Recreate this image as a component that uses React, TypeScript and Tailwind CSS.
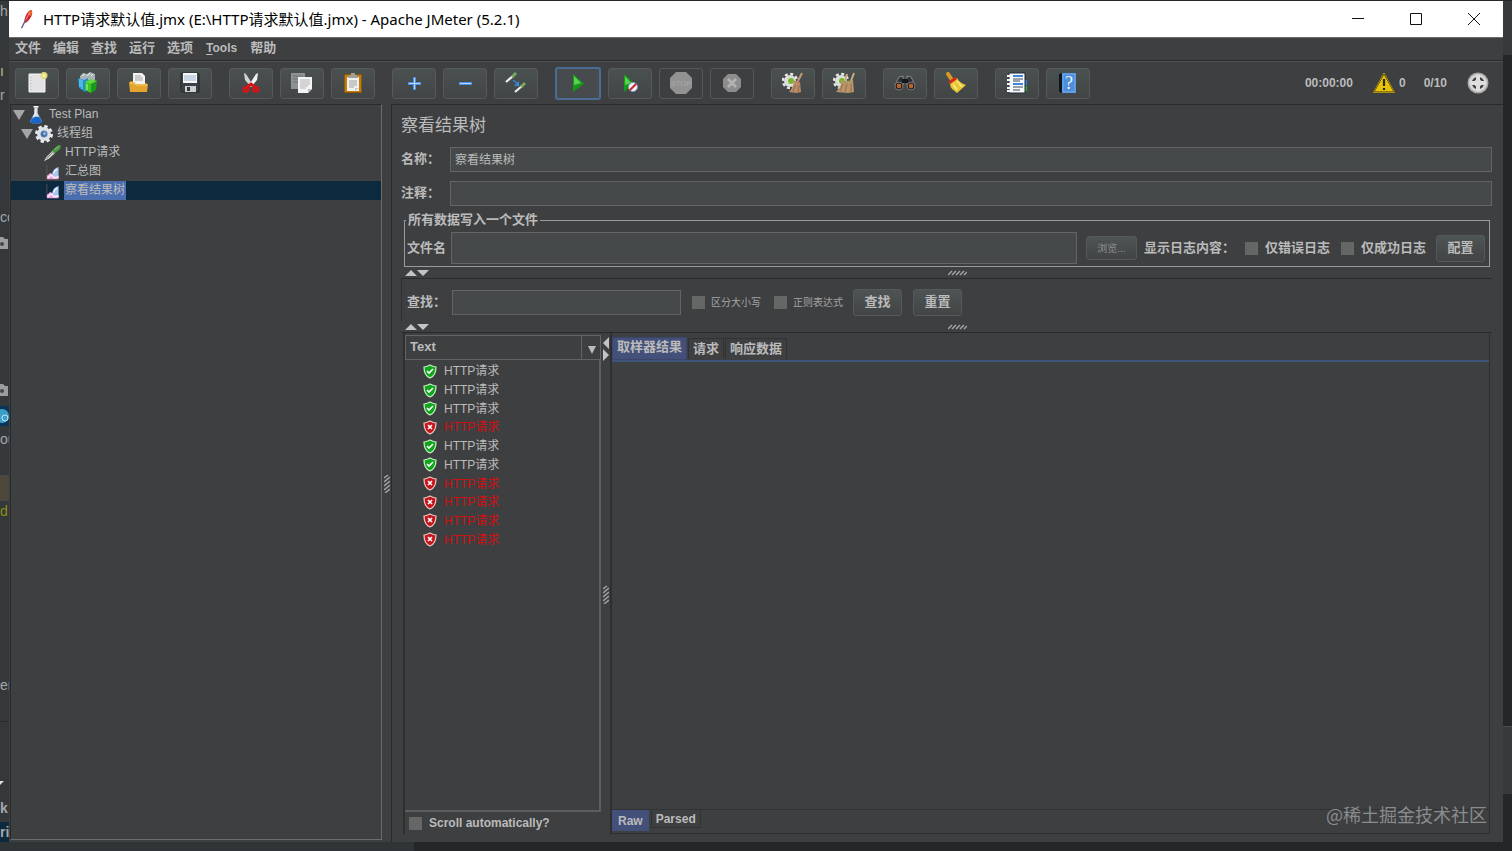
import { useState } from "react";
import type { ReactNode } from "react";
import clsx from "clsx";

const samples = [true, true, true, false, true, true, false, false, false, false];

function Svg({ children, size = 22 }: { children: ReactNode; size?: number }) {
  return (
    <svg width={size} height={size} viewBox="0 0 22 22" fill="none" aria-hidden="true" className="shrink-0">
      {children}
    </svg>
  );
}

function NewIcon() {
  return (
    <Svg>
      <path d="M3 2h16v18H3z" fill="#e2e2e4" stroke="#f6f6f6" />
      <path d="M5 5v13" stroke="#b5b5ba" strokeDasharray="1 2" />
      <circle cx="18" cy="3.500" r="3.500" fill="#dedc80" />
      <circle cx="18" cy="3.500" r="1.500" fill="#f7f5a8" />
    </Svg>
  );
}

function TemplatesIcon() {
  return (
    <Svg>
      <path d="M3 4l3-3 4 1 3-2 5 2v6H3z" fill="#a9b3b5" />
      <path d="M5 4l3-2M10 4l3-3M14 4l2-2" stroke="#e8eeee" />
      <path d="M1 6l6 2 4-2v12l-3 2-6-4z" fill="#1b8fd0" />
      <path d="M3 7v8M5 8v9" stroke="#8fd8f5" />
      <path d="M8 10l6 2v9l-6-3z" fill="#3fc52a" />
      <path d="M14 12l6-3-1 9-5 3z" fill="#199a1c" />
      <path d="M8 10l6-3 6 2-6 3z" fill="#5fdb3c" />
      <path d="M10 12v6" stroke="#b0f58c" />
    </Svg>
  );
}

function OpenIcon() {
  return (
    <Svg>
      <path d="M2 9h4l1 2h12v9H2z" fill="#b87f17" />
      <path d="M5 1h9l3 3v9H5z" fill="#f3f3f3" />
      <path d="M7 4h6M7 6h8M7 8h8" stroke="#a5a5a5" />
      <path d="M1 10h5l2 2h12l-1 8H2z" fill="#e3a52d" />
      <path d="M2 11h4l2 2h11" stroke="#f7cf6d" />
    </Svg>
  );
}

function SaveIcon() {
  return (
    <Svg>
      <path d="M2 1h17l1 1v18H3l-1-1z" fill="#3b4046" stroke="#24282c" />
      <path d="M4 1h14v10H4z" fill="#f4f6f8" />
      <path d="M5 4h12M5 6h12M5 8h12" stroke="#9db4cf" />
      <path d="M6 14h11v6H6z" fill="#cfcfcf" />
      <path d="M8 15h3v4H8z" fill="#33373b" />
    </Svg>
  );
}

function CutIcon() {
  return (
    <Svg>
      <path d="M4 1l2 1 7 11-2 2-6-7z" fill="#cfd3d4" />
      <path d="M18 1l-2 1-7 11 2 2 6-7z" fill="#f1f2f2" />
      <ellipse cx="6" cy="17.500" rx="2.500" ry="2" stroke="#d81318" strokeWidth="2.500" />
      <ellipse cx="16" cy="17.500" rx="2.500" ry="2" stroke="#d81318" strokeWidth="2.500" />
      <path d="M7 15l4-3 4 3" stroke="#d81318" strokeWidth="3" />
    </Svg>
  );
}

function CopyIcon() {
  return (
    <Svg>
      <path d="M0 1h14v16H0z" fill="#8f9294" />
      <path d="M2 4h10M2 7h8M2 10h5" stroke="#6d7072" />
      <path d="M7 5h14v12l-4 4H7z" fill="#f4f4f4" />
      <path d="M9 8h10M9 10h10M9 12h10M9 14h8M9 16h6" stroke="#b4b4b4" />
      <path d="M17 21v-4h4z" fill="#b9b9b9" />
    </Svg>
  );
}

function PasteIcon() {
  return (
    <Svg>
      <rect x="2.500" y="2.500" width="17" height="18" rx="1" fill="#c17d11" stroke="#8f5902" />
      <path d="M5 5h12v14H5z" fill="#f0f0ee" />
      <path d="M7 3h8l1 3H6zM9 1h4v3H9z" fill="#9ea09c" />
      <path d="M7 9h8M7 11h8M7 13h8M7 15h5" stroke="#a0a0a0" />
      <path d="M13 19v-3h4z" fill="#c9c9c9" />
    </Svg>
  );
}

function ToggleIcon() {
  return (
    <Svg>
      <path d="M1 10l7-6" stroke="#eef0ee" strokeWidth="2.200" />
      <path d="M7 5l4-4" stroke="#79a860" strokeWidth="3" />
      <path d="M10 20l7-6" stroke="#eef0ee" strokeWidth="2.200" />
      <path d="M16 15l4-4" stroke="#79a860" strokeWidth="3" />
      <path d="M8 8l5 4" stroke="#3987d8" strokeWidth="1.500" />
      <path d="M14 9v5H9z" fill="#3987d8" />
    </Svg>
  );
}

function PlayIcon() {
  return (
    <Svg>
      <path d="M6 2l11 9.500L6 20z" fill="#139a16" />
      <path d="M7 4l7 7-7 2z" fill="#5dcf52" />
    </Svg>
  );
}

function PlayNoPauseIcon() {
  return (
    <Svg>
      <path d="M5 2l10 9-10 9z" fill="#139a16" />
      <path d="M6 4l6 7-6 2z" fill="#5dcf52" />
      <circle cx="14" cy="15" r="4.500" fill="#eef1f8" stroke="#8097c0" />
      <path d="M11 18l6-6" stroke="#d42222" strokeWidth="2" />
    </Svg>
  );
}

function StopIcon() {
  return (
    <svg width="22" height="22" viewBox="0 0 22 22" aria-hidden="true">
      <path d="M6 0h10l6 6v10l-6 6H6l-6-6V6z" fill="#929292" />
      <text x="11" y="14" textAnchor="middle" fontSize="8" fill="#a9a9a9" fontFamily="Liberation Sans">
        STOP
      </text>
    </svg>
  );
}

function ShutdownIcon() {
  return (
    <Svg>
      <path d="M7 2h8l5 5v8l-5 5H7l-5-5V7z" fill="#8d8d8d" />
      <path d="M7 7l8 8M15 7l-8 8" stroke="#b4b4b4" strokeWidth="2.500" />
    </Svg>
  );
}

function GearShape() {
  return (
    <>
      <circle cx="8" cy="9" r="7" stroke="#e8e9e6" strokeWidth="2.500" strokeDasharray="3 2.500" />
      <circle cx="8" cy="9" r="6" fill="#dddfda" />
      <circle cx="9" cy="9" r="3" fill="#76b82c" />
    </>
  );
}

function ClearIcon() {
  return (
    <Svg>
      <GearShape />
      <path d="M20 1l-4 8" stroke="#c09a70" strokeWidth="2" />
      <path d="M12 9l6 1 1 10-4 1-8-1c3-3 4-6 5-11z" fill="#b98d6a" />
      <path d="M14 13l-3 6M17 13l-1 7" stroke="#94694a" />
      <path d="M12 9l6 2" stroke="#c7705a" />
    </Svg>
  );
}

function ClearAllIcon() {
  return (
    <Svg>
      <GearShape />
      <path d="M14 2l-2 7M21 1l-3 8" stroke="#c9ac82" strokeWidth="2" />
      <path d="M9 8l5 1 6-1 1 12-6 1-12-1c3-3 5-6 6-12z" fill="#b9946a" />
      <path d="M10 12l-3 7M14 12l-2 8M18 12v8" stroke="#94704a" />
      <path d="M9 9l5 1 5-1" stroke="#9aa062" />
    </Svg>
  );
}

function BinocularsIcon() {
  return (
    <Svg>
      <path d="M5 5l4-1v9H1zM17 5l-4-1v9h8z" fill="#2b2e32" stroke="#878b90" />
      <path d="M8 7h6v4H8z" fill="#15181b" />
      <circle cx="5" cy="14" r="4" fill="#17191c" stroke="#777" />
      <circle cx="17" cy="14" r="4" fill="#17191c" stroke="#777" />
      <circle cx="5" cy="14" r="2.400" fill="#b5652c" />
      <circle cx="17" cy="14" r="2.400" fill="#b5652c" />
    </Svg>
  );
}

function BroomIcon() {
  return (
    <Svg>
      <path d="M3 2l4 6" stroke="#d79a25" strokeWidth="4" strokeLinecap="round" />
      <path d="M12 6c2 4 6 6 9 7l-9 8c-3-3-7-4-7-10z" fill="#e8c832" />
      <path d="M8 12l4 6M12 9l5 6" stroke="#fbe98a" strokeWidth="1.500" />
      <path d="M4 11l7-5" stroke="#cf2a20" strokeWidth="3" />
    </Svg>
  );
}

function FunctionIcon() {
  return (
    <Svg>
      <path d="M18 8h3v5h-3z" fill="#2f7de0" />
      <path d="M18 14h3v5h-3z" fill="#39a52d" />
      <path d="M3 1h16v20H3z" fill="#f7f9fc" stroke="#1e2937" />
      <path d="M7 4h10M7 12h10" stroke="#3f86d8" strokeWidth="2" />
      <path d="M7 7h10M7 9h7M7 15h10M7 18h7" stroke="#3a4653" />
      <path d="M1 4h4M1 8h4M1 12h4M1 16h4M1 19h4" stroke="#f5f5f5" strokeWidth="2" />
    </Svg>
  );
}

function HelpIcon() {
  return (
    <svg width="22" height="22" viewBox="0 0 22 22" aria-hidden="true">
      <path d="M2 2l3-1v20l-3-1z" fill="#11161c" />
      <path d="M5 1h14v20H5z" fill="#4d8fdb" />
      <path d="M6 2h12v18H6z" fill="none" stroke="#73acea" />
      <text x="12" y="17" textAnchor="middle" fontSize="18" fill="#f0f5fb" fontFamily="Liberation Serif">
        ?
      </text>
    </svg>
  );
}

function PlusIcon() {
  return (
    <Svg>
      <path d="M11.500 5v13M5 11.500h13" stroke="#4b8fe2" strokeWidth="3" />
      <path d="M11.500 6v11M6 11.500h11" stroke="#b7d7fa" />
    </Svg>
  );
}

function MinusIcon() {
  return (
    <Svg>
      <path d="M5 11.500h13" stroke="#4b8fe2" strokeWidth="3" />
      <path d="M6 11.500h11" stroke="#b7d7fa" />
    </Svg>
  );
}

function FeatherIcon() {
  return (
    <Svg size={20}>
      <path d="M8 15C8 9 11 2 16 1c2 3 0 9-6 14z" fill="#d22128" />
      <path d="M12 5c1-2 2-4 4-4 1 2 1 4-1 7z" fill="#e8632a" />
      <path d="M9 13l5-9" stroke="#f4b0a0" />
      <path d="M10 11l-5 10" stroke="#6d5a8a" strokeWidth="1.500" />
    </Svg>
  );
}

function FlaskIcon() {
  return (
    <Svg size={18}>
      <path d="M9 2h4v7l5 9c0 2-1 3-3 3H7c-2 0-3-1-3-3l5-9z" fill="#d3dfeb" />
      <path d="M7 13h8l3 5c0 2-1 3-3 3H7c-2 0-3-1-3-3z" fill="#1765c9" />
      <path d="M8 1h6" stroke="#fff" strokeWidth="2" />
      <path d="M10 4v6l-3 5" stroke="#fff" />
    </Svg>
  );
}

function ThreadGroupIcon() {
  return (
    <Svg size={18}>
      <circle cx="11" cy="11" r="9" stroke="#e8ebef" strokeWidth="4" strokeDasharray="4 3.070" />
      <circle cx="11" cy="11" r="6" stroke="#dde1e6" strokeWidth="5" />
      <circle cx="11" cy="11" r="4" fill="#2f5f9f" stroke="#8da0b8" />
      <path d="M9 10l3-2 2 3-3 2z" fill="#8ab4e4" />
    </Svg>
  );
}

function SamplerIcon() {
  return (
    <Svg size={18}>
      <path d="M1 21l3-5 8-8 3 3-8 7z" fill="#cfd3cf" />
      <path d="M4 18l8-8" stroke="#6c716c" />
      <path d="M11 8l8-7 3 1-1 4-7 6z" fill="#4c9440" />
      <path d="M14 7l5-4" stroke="#9ccc8b" />
    </Svg>
  );
}

function ListenerIcon() {
  return (
    <Svg size={16}>
      <path d="M4 1v19h17" stroke="#5d5f61" />
      <path d="M4 20v-4l5-4 3 3 8 1v5H4z" fill="#ef9fe0" />
      <path d="M11 14c1-5 4-9 9-10v14l-6 1z" fill="#a9c6ee" />
      <path d="M13 13c1-3 3-5 5-6" stroke="#eef5ff" strokeWidth="2" />
      <path d="M5 19l5-4 4 4 6-1" stroke="#fff0fb" strokeWidth="2" />
    </Svg>
  );
}

function ShieldIcon({ ok }: { ok: boolean }) {
  return (
    <svg width="14" height="15" viewBox="0 0 14 15" fill="none" aria-hidden="true" className="shrink-0">
      <path
        d="M7 1c2 1 4 2 6 2 0 5-1 9-6 11C2 12 1 8 1 3c2 0 4-1 6-2z"
        fill={ok ? "#0fa61c" : "#c3161c"}
        stroke={ok ? "#c9efc9" : "#f0caca"}
        strokeWidth="1.200"
      />
      {ok ? (
        <path d="M4 7l2 2 4-4" stroke="#fff" strokeWidth="1.600" />
      ) : (
        <path d="M5 5l4 4M9 5L5 9" stroke="#fff" strokeWidth="1.600" />
      )}
    </svg>
  );
}

function WarningIcon() {
  return (
    <Svg>
      <path d="M11 2l10 18H1z" fill="#e8c30c" stroke="#3a3000" />
      <path d="M11 1l10.500 19.500H.5z" stroke="#d8b80e" strokeWidth=".7" />
      <path d="M11 7v7M11 16v2" stroke="#2d2600" strokeWidth="2.200" />
    </Svg>
  );
}

function RemoteIcon() {
  return (
    <Svg>
      <circle cx="11" cy="11" r="10.500" fill="#a9a9a9" />
      <circle cx="11" cy="11" r="9" fill="#d6d6d6" />
      <circle cx="11" cy="11" r="5" stroke="#3f4041" strokeWidth="2.500" />
      <path d="M11 3v16M3 11h16" stroke="#dedede" strokeWidth="4" />
    </Svg>
  );
}

const toolGroups: { label: string; icon: ReactNode; focused?: boolean; off?: boolean }[][] = [
  [
    { label: "新建", icon: <NewIcon /> },
    { label: "模板", icon: <TemplatesIcon /> },
    { label: "打开", icon: <OpenIcon /> },
    { label: "保存", icon: <SaveIcon /> },
  ],
  [
    { label: "剪切", icon: <CutIcon /> },
    { label: "复制", icon: <CopyIcon /> },
    { label: "粘贴", icon: <PasteIcon /> },
  ],
  [
    { label: "展开", icon: <PlusIcon /> },
    { label: "折叠", icon: <MinusIcon /> },
    { label: "切换", icon: <ToggleIcon /> },
  ],
  [
    { label: "启动", icon: <PlayIcon />, focused: true },
    { label: "不停顿开始", icon: <PlayNoPauseIcon /> },
    { label: "停止", icon: <StopIcon />, off: true },
    { label: "关闭", icon: <ShutdownIcon />, off: true },
  ],
  [
    { label: "清除", icon: <ClearIcon /> },
    { label: "清除全部", icon: <ClearAllIcon /> },
  ],
  [
    { label: "搜索", icon: <BinocularsIcon /> },
    { label: "重置搜索", icon: <BroomIcon /> },
  ],
  [
    { label: "函数助手", icon: <FunctionIcon /> },
    { label: "帮助", icon: <HelpIcon /> },
  ],
];

function TitleBar() {
  return (
    <header className="flex h-9 shrink-0 items-center bg-white pl-2 text-black">
      <FeatherIcon />
      <h1 className="ml-1.5 flex-1 font-['Noto_Sans','Noto_Sans_CJK_SC',sans-serif] text-[15px]">
        HTTP请求默认值.jmx (E:\HTTP请求默认值.jmx) - Apache JMeter (5.2.1)
      </h1>
      {["M0 5.500h12", "M.5 .5h11v11H.5z", "M0 0l12 12M12 0L0 12"].map((d, i) => (
        <button key={d} aria-label={["最小化", "最大化", "关闭"][i]} className="flex h-9 w-[58px] items-center justify-center">
          <svg width="12" height="12" viewBox="0 0 12 12" fill="none" stroke="#111">
            <path d={d} />
          </svg>
        </button>
      ))}
    </header>
  );
}

function MenuBar() {
  return (
    <nav className="flex h-6 shrink-0 items-center gap-3 border-t border-b border-t-[#6b6d6e] border-b-[#28292a] px-1.5 pb-0.5 text-[13px] leading-5 font-bold">
      {["文件", "编辑", "查找", "运行", "选项"].map((m) => (
        <button key={m}>{m}</button>
      ))}
      <button className="px-px text-xs">
        <span className="underline underline-offset-2">T</span>ools
      </button>
      <button>帮助</button>
    </nav>
  );
}

function Toolbar() {
  return (
    <div className="flex h-[43px] shrink-0 items-center border-t border-[#515354] pr-3.5 pl-1.5">
      <div className="flex gap-[17px]">
        {toolGroups.map((group) => (
          <div key={group[0].label} className="flex items-center gap-[7px]">
            {group.map((t) => (
              <button
                key={t.label}
                aria-label={t.label}
                disabled={t.off}
                className={clsx(
                  "flex items-center justify-center rounded-[3px]",
                  t.focused
                    ? "h-[33px] w-[46px] border-2 border-[#4a6c96] bg-[#474b4d]"
                    : "h-[31px] w-11 border border-[#55595a]",
                  !t.focused && !t.off && "bg-linear-to-b from-[#4b5051] to-[#414546]",
                )}
              >
                {t.icon}
              </button>
            ))}
          </div>
        ))}
      </div>
      <div className="ml-auto flex items-center text-xs font-bold">
        <span>00:00:00</span>
        <span className="ml-5 flex items-center gap-1">
          <WarningIcon />0
        </span>
        <span className="mr-5 ml-[18px]">0/10</span>
        <RemoteIcon />
      </div>
    </div>
  );
}

function TreeRow({ icon, text, indent, open, selected }: { icon: ReactNode; text: string; indent: string; open?: boolean; selected?: boolean }) {
  return (
    <li className={clsx("flex h-[19px] items-center", indent, selected && "bg-[#0d293e]")}>
      {open && (
        <svg width="12" height="10" viewBox="0 0 12 10" className="mr-0.5 shrink-0">
          <path d="M0 0h12L6 10z" fill="#a5a6a7" />
        </svg>
      )}
      <span className="flex w-[18px] shrink-0 justify-center">{icon}</span>
      <span className={clsx("ml-[3px] px-px leading-[19px]", selected && "bg-[#4b6eaf]")}>{text}</span>
    </li>
  );
}

function Grip({ vertical }: { vertical?: boolean }) {
  return (
    <svg width={vertical ? 6 : 19} height={vertical ? 19 : 6} fill="none" stroke="#a2a3a4" strokeWidth="1.500" aria-hidden="true">
      <path
        d={
          vertical
            ? "M0 4l4-3M0 8l6-5M0 12l6-5M0 16l6-5M1 19l5-4"
            : "M0 5l4-4M4 5l4-4M8 5l4-4M12 5l4-4M16 5l3-3"
        }
      />
    </svg>
  );
}

function HorizontalDivider() {
  return (
    <div className="flex h-3 items-center border-b border-[#292a2b] pr-1.5 pl-1">
      <svg width="24" height="6" fill="#c3c4c4" aria-hidden="true">
        <path d="M0 6l6-6 6 6zM12 0h12l-6 6z" />
      </svg>
      <div className="flex flex-1 justify-center">
        <Grip />
      </div>
    </div>
  );
}

function CheckBox({ id, label, small }: { id: string; label: string; small?: boolean }) {
  return (
    <span className={clsx("flex items-center", small ? "gap-1.5" : "gap-[7px]")}>
      <input id={id} type="checkbox" className="size-[13px] appearance-none bg-[#656767] checked:bg-[#4b6eaf]" />
      <label htmlFor={id} className={small ? "text-[10px] font-normal" : undefined}>
        {label}
      </label>
    </span>
  );
}

const field = "min-w-0 border border-[#646464] bg-[#45494a] px-1 outline-none";
const button = "rounded-[3px] border border-[#55595a] bg-linear-to-b from-[#4e5354] to-[#414546]";

function ResultsSplit() {
  const [tab, setTab] = useState("取样器结果");
  const [mode, setMode] = useState("Raw");

  return (
    <div className="mx-0.5 mb-2 flex min-h-0 flex-1 border-l-2 border-[#2d2f30]">
      <div className="flex w-[196px] shrink-0 flex-col pt-0.5">
        <div className="relative">
          <select
            aria-label="Renderer"
            className="h-[25px] w-full appearance-none border border-[#646464] bg-transparent px-1 pb-0.5 text-[13px] font-bold outline-none"
          >
            <option>Text</option>
          </select>
          <div className="pointer-events-none absolute inset-y-0 right-0 flex w-5 items-center justify-center border-l border-[#646464]">
            <svg width="8" height="8" className="mt-1">
              <path d="M0 0h8L4 8z" fill="#bbb" />
            </svg>
          </div>
        </div>
        <div className="min-h-0 flex-1 overflow-hidden border-r-2 border-b-2 border-[#5b5d5e] pt-0.5">
          <ul className="grid h-[187px] text-xs">
            {samples.map((ok, i) => (
              <li key={i} className={clsx("flex items-center gap-[7px] pl-[18px]", !ok && "text-[#d01013]")}>
                <ShieldIcon ok={ok} />
                <span className="leading-[18px]">HTTP请求</span>
              </li>
            ))}
          </ul>
        </div>
        <div className="flex h-[22px] items-center pl-1 text-xs font-bold">
          <CheckBox id="scroll" label="Scroll automatically?" />
        </div>
      </div>

      <div className="flex w-[11px] shrink-0 flex-col items-center border-r-2 border-[#2d2f30]">
        <svg width="6" height="25" fill="#c3c4c4" className="mt-1" aria-hidden="true">
          <path d="M6 0v12L0 6zM0 12v12l6-6z" />
        </svg>
        <div className="flex flex-1 items-center pb-2">
          <Grip vertical />
        </div>
      </div>

      <div className="flex min-w-0 flex-1 flex-col border-r border-b border-[#2d2f30] pt-1">
        <div role="tablist" className="flex h-[23px] items-start gap-px text-[13px] font-bold">
          {["取样器结果", "请求", "响应数据"].map((t) => (
            <button
              key={t}
              role="tab"
              aria-selected={tab === t}
              onClick={() => setTab(t)}
              className={clsx(
                "px-1",
                tab === t
                  ? "h-[23px] border border-[#3b456a] bg-[#435079] pb-1 leading-[18px]"
                  : "mt-px h-[21px] border border-b-0 border-[#303233] leading-5",
              )}
            >
              {t}
            </button>
          ))}
        </div>
        <div className="min-h-0 flex-1 border-t-2 border-[#3d5577]" />
        <div role="tablist" className="flex h-6 shrink-0 gap-0.5 border-t border-[#303233] text-xs font-bold">
          {["Raw", "Parsed"].map((m) => (
            <button
              key={m}
              role="tab"
              aria-selected={mode === m}
              onClick={() => setMode(m)}
              className={mode === m ? "h-[21px] bg-[#435079] px-1.5" : "h-[18px] border border-t-0 border-[#303233] px-1"}
            >
              {m}
            </button>
          ))}
        </div>
      </div>
    </div>
  );
}

function ResultsPane() {
  return (
    <main className="flex min-w-0 flex-1 flex-col border-t border-l border-[#292a2b] pr-[11px] pl-[9px] text-[13px]">
      <h2 className="flex h-10 items-center pt-0.5 text-[17px]">察看结果树</h2>
      <div className="mt-0.5 flex items-center">
        <label htmlFor="name" className="w-[49px] pb-0.5 font-bold">名称：</label>
        <input id="name" defaultValue="察看结果树" className={clsx(field, "h-[25px] flex-1 pb-0.5 text-xs")} />
      </div>
      <div className="mt-[9px] flex items-center">
        <label htmlFor="comment" className="w-[49px] pb-0.5 font-bold">注释：</label>
        <input id="comment" className={clsx(field, "h-[25px] flex-1")} />
      </div>

      <fieldset className="mt-[7px] mr-0.5 ml-[3px] border border-[#9a9b9c] pb-0.5 font-bold">
        <legend className="ml-px px-0.5 leading-[14px]">所有数据写入一个文件</legend>
        <div className="flex items-center pt-[5px] pr-1 pl-0.5">
          <label htmlFor="file">文件名</label>
          <input id="file" className={clsx(field, "ml-[5px] h-8 flex-1")} />
          <button className={clsx(button, "ml-[9px] h-6 w-[51px] text-[10px] font-normal text-[#8f9091]")}>浏览...</button>
          <span className="ml-[7px]">显示日志内容：</span>
          <div className="ml-2.5 flex gap-[11px]">
            <CheckBox id="errors" label="仅错误日志" />
            <CheckBox id="success" label="仅成功日志" />
          </div>
          <button className={clsx(button, "ml-2.5 h-[27px] w-[49px]")}>配置</button>
        </div>
      </fieldset>
      <HorizontalDivider />

      <div className="flex h-[42px] items-center border-l border-[#2d2f30] pt-1 pl-[5px] font-bold">
        <label htmlFor="find" className="w-[45px]">查找：</label>
        <input id="find" className={clsx(field, "h-[25px] w-[229px]")} />
        <div className="mr-2.5 ml-[11px] flex gap-[13px] text-[#a4a5a6]">
          <CheckBox id="case" label="区分大小写" small />
          <CheckBox id="regex" label="正则表达式" small />
        </div>
        <div className="flex gap-[11px]">
          <button className={clsx(button, "h-[27px] w-[49px]")}>查找</button>
          <button className={clsx(button, "h-[27px] w-[49px]")}>重置</button>
        </div>
      </div>
      <HorizontalDivider />
      <ResultsSplit />
    </main>
  );
}

// Slivers of the editor that stays visible behind the window
function EditorEdge() {
  return (
    <div aria-hidden="true" className="w-[9px] shrink-0 overflow-hidden bg-[#35383a] text-sm leading-5 whitespace-nowrap text-[#a5a7a8]">
      <div className="h-[60px]">h</div>
      <div className="h-6 text-[#b9b98a]">ı</div>
      <div className="h-[122px]">r</div>
      <div className="h-[30px]">cc</div>
      <div className="h-[147px]"><CameraEdge /></div>
      <div className="h-[22px]"><CameraEdge /></div>
      <div className="h-[23px]">
        <svg width="9" height="20">
          <path d="M0 0h9v20H0z" fill="#0d3456" />
          <circle cx="2" cy="10" r="7" fill="#3aa0c8" />
          <circle cx="5" cy="12" r="3" fill="none" stroke="#c6e6f5" />
        </svg>
      </div>
      <div className="h-[46px]">ou</div>
      <div className="h-[26px] bg-[#4d473c]" />
      <div className="h-[174px] text-[#8c9010]">d</div>
      <div className="h-[46px]">er</div>
      <div className="h-[77px] border-t border-[#2a2b2c] pt-[58px]">
        <svg width="9" height="6"><path d="M-4 1h8L0 5z" fill="#ddd" /></svg>
      </div>
      <div className="h-6 font-bold">k</div>
      <div className="h-[22px] bg-[#0d293e] font-bold">ri</div>
    </div>
  );
}

function CameraEdge() {
  return (
    <svg width="9" height="12">
      <path d="M0 0h3l2 2h3v10H0z" fill="#9b9da0" />
      <circle cx="2" cy="7" r="2" fill="#44474a" />
    </svg>
  );
}

export default function App() {
  return (
    <div className="flex h-screen flex-col overflow-hidden bg-[#252627] pt-px font-['Liberation_Sans','Noto_Sans_CJK_SC',sans-serif] text-[#bbbbbb]">
      <div className="flex min-h-0 flex-1">
        <EditorEdge />
        <div className="relative flex min-w-0 flex-1 flex-col bg-[#3d3f41]">
          <TitleBar />
          <MenuBar />
          <Toolbar />
          <div className="flex min-h-0 flex-1">
            <aside className="mb-0.5 ml-px w-[372px] shrink-0 border border-t-[#292a2b] border-r-[#6a6c6d] border-b-[#6a6c6d] border-l-[#292a2b] text-xs">
              <ul>
                <TreeRow icon={<FlaskIcon />} text="Test Plan" indent="pl-0.5" open />
                <TreeRow icon={<ThreadGroupIcon />} text="线程组" indent="pl-2.5" open />
                <TreeRow icon={<SamplerIcon />} text="HTTP请求" indent="pl-8" />
                <TreeRow icon={<ListenerIcon />} text="汇总图" indent="pl-8" />
                <TreeRow icon={<ListenerIcon />} text="察看结果树" indent="pl-8" selected />
              </ul>
            </aside>
            <div className="flex w-[9px] shrink-0 items-center justify-center pt-5">
              <Grip vertical />
            </div>
            <ResultsPane />
          </div>
          <div className="pointer-events-none absolute right-4 bottom-3.5 font-['Noto_Sans_CJK_SC',sans-serif] text-lg leading-7 text-[#8a8c8e]">
            @稀土掘金技术社区
          </div>
        </div>
        <div aria-hidden="true" className="flex w-[9px] shrink-0 flex-col bg-[#252627]">
          <div className="h-[54px] bg-[#38393b]" />
          <div className="flex-1" />
          <div className="mb-12 h-[68px] border-t border-[#4a4b4c] bg-[#38393b]" />
        </div>
      </div>
      <div className="h-[9px] shrink-0 bg-[#252627]">
        <div className="h-full w-[414px] bg-[#2f3436]" />
      </div>
    </div>
  );
}
